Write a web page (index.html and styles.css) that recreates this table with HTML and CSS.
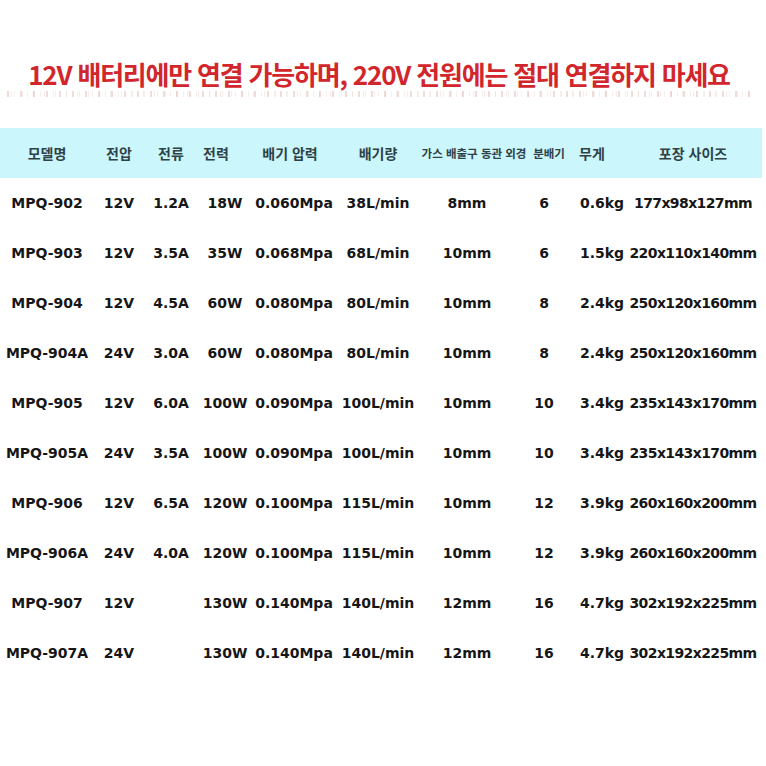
FILE: index.html
```html
<!DOCTYPE html>
<html lang="ko">
<head>
<meta charset="utf-8">
<link rel="stylesheet" href="styles.css">
</head>
<body>
<div class="page">
  <div class="title-wrap">
    <h1 class="title">12V 배터리에만 연결 가능하며, 220V 전원에는 절대 연결하지 마세요</h1>
    <div class="smudge"></div>
  </div>
  <div class="table">
    <div class="row head">
      <div>모델명</div><div>전압</div><div>전류</div><div class="sh9">전력</div><div class="sh4">배기 압력</div><div>배기량</div><div class="small gas">가스 배출구 동관 외경</div><div class="small dist">분배기</div><div class="sh10">무게</div><div>포장 사이즈</div>
    </div>
    <div class="row"><div>MPQ-902</div><div>12V</div><div>1.2A</div><div>18W</div><div>0.060Mpa</div><div>38L/min</div><div>8mm</div><div>6</div><div>0.6kg</div><div class="size">177x98x127mm</div></div>
    <div class="row"><div>MPQ-903</div><div>12V</div><div>3.5A</div><div>35W</div><div>0.068Mpa</div><div>68L/min</div><div>10mm</div><div>6</div><div>1.5kg</div><div class="size">220x110x140mm</div></div>
    <div class="row"><div>MPQ-904</div><div>12V</div><div>4.5A</div><div>60W</div><div>0.080Mpa</div><div>80L/min</div><div>10mm</div><div>8</div><div>2.4kg</div><div class="size">250x120x160mm</div></div>
    <div class="row"><div>MPQ-904A</div><div>24V</div><div>3.0A</div><div>60W</div><div>0.080Mpa</div><div>80L/min</div><div>10mm</div><div>8</div><div>2.4kg</div><div class="size">250x120x160mm</div></div>
    <div class="row"><div>MPQ-905</div><div>12V</div><div>6.0A</div><div>100W</div><div>0.090Mpa</div><div>100L/min</div><div>10mm</div><div>10</div><div>3.4kg</div><div class="size">235x143x170mm</div></div>
    <div class="row"><div>MPQ-905A</div><div>24V</div><div>3.5A</div><div>100W</div><div>0.090Mpa</div><div>100L/min</div><div>10mm</div><div>10</div><div>3.4kg</div><div class="size">235x143x170mm</div></div>
    <div class="row"><div>MPQ-906</div><div>12V</div><div>6.5A</div><div>120W</div><div>0.100Mpa</div><div>115L/min</div><div>10mm</div><div>12</div><div>3.9kg</div><div class="size">260x160x200mm</div></div>
    <div class="row"><div>MPQ-906A</div><div>24V</div><div>4.0A</div><div>120W</div><div>0.100Mpa</div><div>115L/min</div><div>10mm</div><div>12</div><div>3.9kg</div><div class="size">260x160x200mm</div></div>
    <div class="row"><div>MPQ-907</div><div>12V</div><div></div><div>130W</div><div>0.140Mpa</div><div>140L/min</div><div>12mm</div><div>16</div><div>4.7kg</div><div class="size">302x192x225mm</div></div>
    <div class="row"><div>MPQ-907A</div><div>24V</div><div></div><div>130W</div><div>0.140Mpa</div><div>140L/min</div><div>12mm</div><div>16</div><div>4.7kg</div><div class="size">302x192x225mm</div></div>
  </div>
</div>
</body>
</html>
```

FILE: styles.css
```css
html, body {
  margin: 0;
  padding: 0;
  background: #ffffff;
}
.page {
  width: 766px;
  height: 766px;
  overflow: hidden;
}
.title-wrap {
  height: 128px;
  display: flex;
  flex-direction: column;
  align-items: center;
}
.title {
  margin: 54px 8px 0 0;
  font-family: "Noto Sans CJK KR", "Noto Sans", sans-serif;
  font-weight: 700;
  font-size: 26px;
  line-height: 40px;
  letter-spacing: -1.2px;
  color: #d2262d;
  white-space: nowrap;
}
.smudge {
  width: 746px;
  height: 6px;
  margin: -3px 6px 0 0;
  opacity: 0.55;
  background:
    repeating-linear-gradient(90deg, rgba(205, 110, 100, 0.45) 0 2px, rgba(255,255,255,0) 2px 7px, rgba(215, 170, 150, 0.35) 7px 8px, rgba(255,255,255,0) 8px 13px),
    repeating-linear-gradient(90deg, rgba(255,255,255,0) 0 4px, rgba(190, 150, 140, 0.3) 4px 5px, rgba(255,255,255,0) 5px 11px);
}
.table {
  width: 756px;
}
.row {
  display: grid;
  grid-template-columns: 94px 50px 54px 54px 84px 84px 94px 60px 56px 126px;
  height: 50px;
  align-items: center;
  font-family: "DejaVu Sans", sans-serif;
  font-weight: 700;
  font-size: 14px;
  color: #161616;
  white-space: nowrap;
}
.row > div {
  display: flex;
  justify-content: center;
  min-width: 0;
}
.row .size {
  letter-spacing: -0.6px;
}
.row.head {
  width: 762px;
  background: #cbf6fb;
  font-family: "Noto Sans CJK KR", sans-serif;
  font-weight: 700;
  font-size: 14px;
  color: #2e4147;
}
.row.head .small {
  font-size: 11.5px;
}
.row.head .gas { padding-left: 14px; }
.row.head .dist { padding-left: 10px; }
.row.head .sh9 { padding-right: 18px; }
.row.head .sh4 { padding-right: 8px; }
.row.head .sh10 { padding-right: 20px; }
```
